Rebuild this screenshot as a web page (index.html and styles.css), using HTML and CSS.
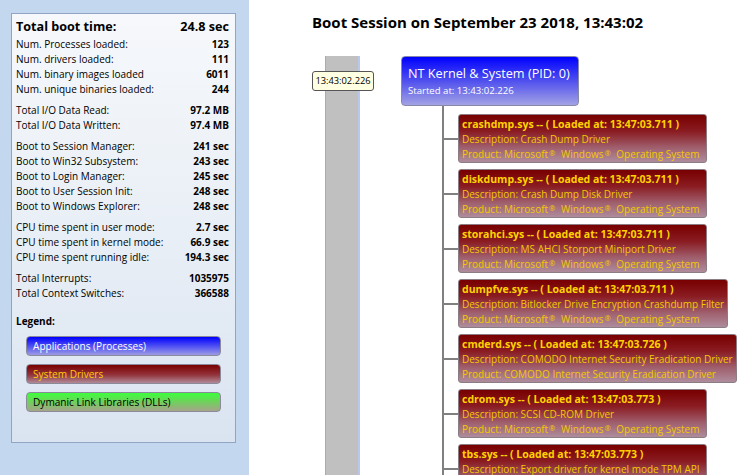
FILE: index.html
```html
<!DOCTYPE html>
<html>
<head>
<meta charset="utf-8">
<link rel="stylesheet" href="styles.css">
</head>
<body>
<aside class="side">
  <div class="stats">
    <div class="row head"><span>Total boot time:</span><b>24.8 sec</b></div>
    <div class="group">
      <div class="row"><span>Num. Processes loaded:</span><b>123</b></div>
      <div class="row"><span>Num. drivers loaded:</span><b>111</b></div>
      <div class="row"><span>Num. binary images loaded</span><b>6011</b></div>
      <div class="row"><span>Num. unique binaries loaded:</span><b>244</b></div>
    </div>
    <div class="group">
      <div class="row"><span>Total I/O Data Read:</span><b>97.2 MB</b></div>
      <div class="row"><span>Total I/O Data Written:</span><b>97.4 MB</b></div>
    </div>
    <div class="group">
      <div class="row"><span>Boot to Session Manager:</span><b>241 sec</b></div>
      <div class="row"><span>Boot to Win32 Subsystem:</span><b>243 sec</b></div>
      <div class="row"><span>Boot to Login Manager:</span><b>245 sec</b></div>
      <div class="row"><span>Boot to User Session Init:</span><b>248 sec</b></div>
      <div class="row"><span>Boot to Windows Explorer:</span><b>248 sec</b></div>
    </div>
    <div class="group">
      <div class="row"><span>CPU time spent in user mode:</span><b>2.7 sec</b></div>
      <div class="row"><span>CPU time spent in kernel mode:</span><b>66.9 sec</b></div>
      <div class="row"><span>CPU time spent running idle:</span><b>194.3 sec</b></div>
    </div>
    <div class="group">
      <div class="row"><span>Total Interrupts:</span><b>1035975</b></div>
      <div class="row"><span>Total Context Switches:</span><b>366588</b></div>
    </div>
    <div class="legend-title">Legend:</div>
    <div class="legend">
      <div class="chip chip-app">Applications (Processes)</div>
      <div class="chip chip-drv">System Drivers</div>
      <div class="chip chip-dll">Dymanic Link Libraries (DLLs)</div>
    </div>
  </div>
</aside>
<main class="main">
  <h1 class="title">Boot Session on September 23 2018, 13:43:02</h1>
  <div class="canvas">
    <div class="timeline">
      <div class="bar"></div>
      <div class="stamp">13:43:02.226</div>
    </div>
    <div class="tree">
      <div class="root">
        <div class="root-name">NT Kernel &amp; System (PID: 0)</div>
        <div class="root-sub">Started at: 13:43:02.226</div>
      </div>
      <div class="children">
        <div class="child"><span class="link"></span><div class="drv">
          <div class="drv-name">crashdmp.sys -- ( Loaded at: 13:47:03.711 )</div>
          <div>Description: Crash Dump Driver</div>
          <div>Product: Microsoft<sup>®</sup> Windows<sup>®</sup> Operating System</div>
        </div></div>
        <div class="child"><span class="link"></span><div class="drv">
          <div class="drv-name">diskdump.sys -- ( Loaded at: 13:47:03.711 )</div>
          <div>Description: Crash Dump Disk Driver</div>
          <div>Product: Microsoft<sup>®</sup> Windows<sup>®</sup> Operating System</div>
        </div></div>
        <div class="child"><span class="link"></span><div class="drv">
          <div class="drv-name">storahci.sys -- ( Loaded at: 13:47:03.711 )</div>
          <div>Description: MS AHCI Storport Miniport Driver</div>
          <div>Product: Microsoft<sup>®</sup> Windows<sup>®</sup> Operating System</div>
        </div></div>
        <div class="child"><span class="link"></span><div class="drv">
          <div class="drv-name">dumpfve.sys -- ( Loaded at: 13:47:03.711 )</div>
          <div>Description: Bitlocker Drive Encryption Crashdump Filter</div>
          <div>Product: Microsoft<sup>®</sup> Windows<sup>®</sup> Operating System</div>
        </div></div>
        <div class="child"><span class="link"></span><div class="drv">
          <div class="drv-name">cmderd.sys -- ( Loaded at: 13:47:03.726 )</div>
          <div>Description: COMODO Internet Security Eradication Driver</div>
          <div>Product: COMODO Internet Security Eradication Driver</div>
        </div></div>
        <div class="child"><span class="link"></span><div class="drv">
          <div class="drv-name">cdrom.sys -- ( Loaded at: 13:47:03.773 )</div>
          <div>Description: SCSI CD-ROM Driver</div>
          <div>Product: Microsoft<sup>®</sup> Windows<sup>®</sup> Operating System</div>
        </div></div>
        <div class="child"><span class="link"></span><div class="drv">
          <div class="drv-name">tbs.sys -- ( Loaded at: 13:47:03.773 )</div>
          <div>Description: Export driver for kernel mode TPM API</div>
        </div></div>
      </div>
    </div>
  </div>
</main>
</body>
</html>
```

FILE: styles.css
```css
* { box-sizing: border-box; }
html, body { margin: 0; padding: 0; }
body {
  width: 750px;
  height: 475px;
  overflow: hidden;
  display: flex;
  font-family: "Open Sans", "Noto Sans", sans-serif;
  color: #000;
  background: #fff;
}

.side {
  width: 249px;
  flex: none;
  background: #c3d7ee;
  padding: 13px 13px 0 11px;
}
.stats {
  height: 430px;
  border: 1px solid #8fa5c3;
  background: linear-gradient(to bottom, #f6f8fb 0%, #e9eff6 50%, #dae4f1 100%);
  padding: 1px 6px 0 4px;
  font-size: 10px;
}
.row {
  display: flex;
  justify-content: space-between;
  align-items: center;
  height: 15px;
  line-height: 15px;
  white-space: nowrap;
}
.row b { font-weight: 700; }
.row.head {
  height: 22px;
  line-height: 21px;
  font-size: 12.6px;
  font-weight: 700;
}
.group { margin-top: 6px; }
.row.head + .group { margin-top: 0; }
.legend-title {
  margin-top: 13px;
  font-weight: 700;
  line-height: 15px;
}
.legend {
  margin: 7px 8px 0 10px;
  display: flex;
  flex-direction: column;
  gap: 8px;
}
.chip {
  height: 20px;
  line-height: 19px;
  border: 1px solid #8a8a9a;
  border-radius: 4px;
  padding-left: 6px;
  font-size: 10.1px;
}
.chip-app { background: linear-gradient(to bottom, #0000ff, #9c9ce6); color: #fff; }
.chip-drv { background: linear-gradient(to bottom, #7a0000, #93343c 55%, #b08a98); color: #ffcc00; }
.chip-dll { background: linear-gradient(to bottom, #3cff3c, #70d05c 50%, #a6a48a); color: #000; }

.main {
  flex: 1;
  display: flex;
  flex-direction: column;
  min-width: 0;
}
.title {
  flex: none;
  margin: 0;
  padding: 12px 0 0 63px;
  height: 56px;
  font-size: 15px;
  line-height: 20px;
  font-weight: 700;
  white-space: nowrap;
}
.canvas {
  flex: 1;
  display: flex;
  align-items: flex-start;
}
.timeline {
  position: relative;
  margin-left: 76px;
  width: 35px;
  align-self: stretch;
  flex: none;
}
.bar {
  height: 100%;
  background: #c0c0c0;
  border-left: 1px solid #a4aac4;
  border-right: 2px solid #b9c8ea;
}
.stamp {
  position: absolute;
  left: -13px;
  top: 15px;
  width: 62px;
  height: 20px;
  background: #ffffe1;
  border: 1px solid #555;
  border-radius: 3px;
  font-size: 9.3px;
  line-height: 18px;
  text-align: center;
  white-space: nowrap;
}

.tree {
  margin-left: 41px;
  display: flex;
  flex-direction: column;
  align-items: flex-start;
}
.root {
  flex: none;
  width: 178px;
  height: 50px;
  border: 1px solid #8888a8;
  border-radius: 4px;
  background: linear-gradient(to bottom, #0000ff 0%, #4848f0 45%, #a2a2e4 100%);
  color: #fff;
  padding: 6px 6px 0 6px;
  white-space: nowrap;
}
.root-name { font-size: 12.7px; line-height: 20px; }
.root-sub { font-size: 9.6px; line-height: 15px; }

.children {
  margin-left: 41px;
  border-left: 2px solid #808080;
  padding-top: 8px;
  display: flex;
  flex-direction: column;
  gap: 6px;
}
.child {
  display: flex;
  align-items: center;
}
.link {
  width: 14px;
  height: 2px;
  background: #808080;
  flex: none;
}
.drv {
  flex: none;
  min-width: 249px;
  height: 49px;
  border: 1px solid #8c7c84;
  border-radius: 3px;
  background: linear-gradient(to bottom, #780000 0%, #8a1c22 35%, #a0606e 70%, #ae8c9c 100%);
  color: #f5c800;
  padding: 2px 3px 0 3px;
  font-size: 10px;
  line-height: 15px;
  white-space: nowrap;
}
.drv-name { font-weight: 700; color: #ffd200; font-size: 10.5px; }
.drv sup { font-size: 7.5px; line-height: 0; vertical-align: 2px; margin: 0 3px 0 1px; }
```
